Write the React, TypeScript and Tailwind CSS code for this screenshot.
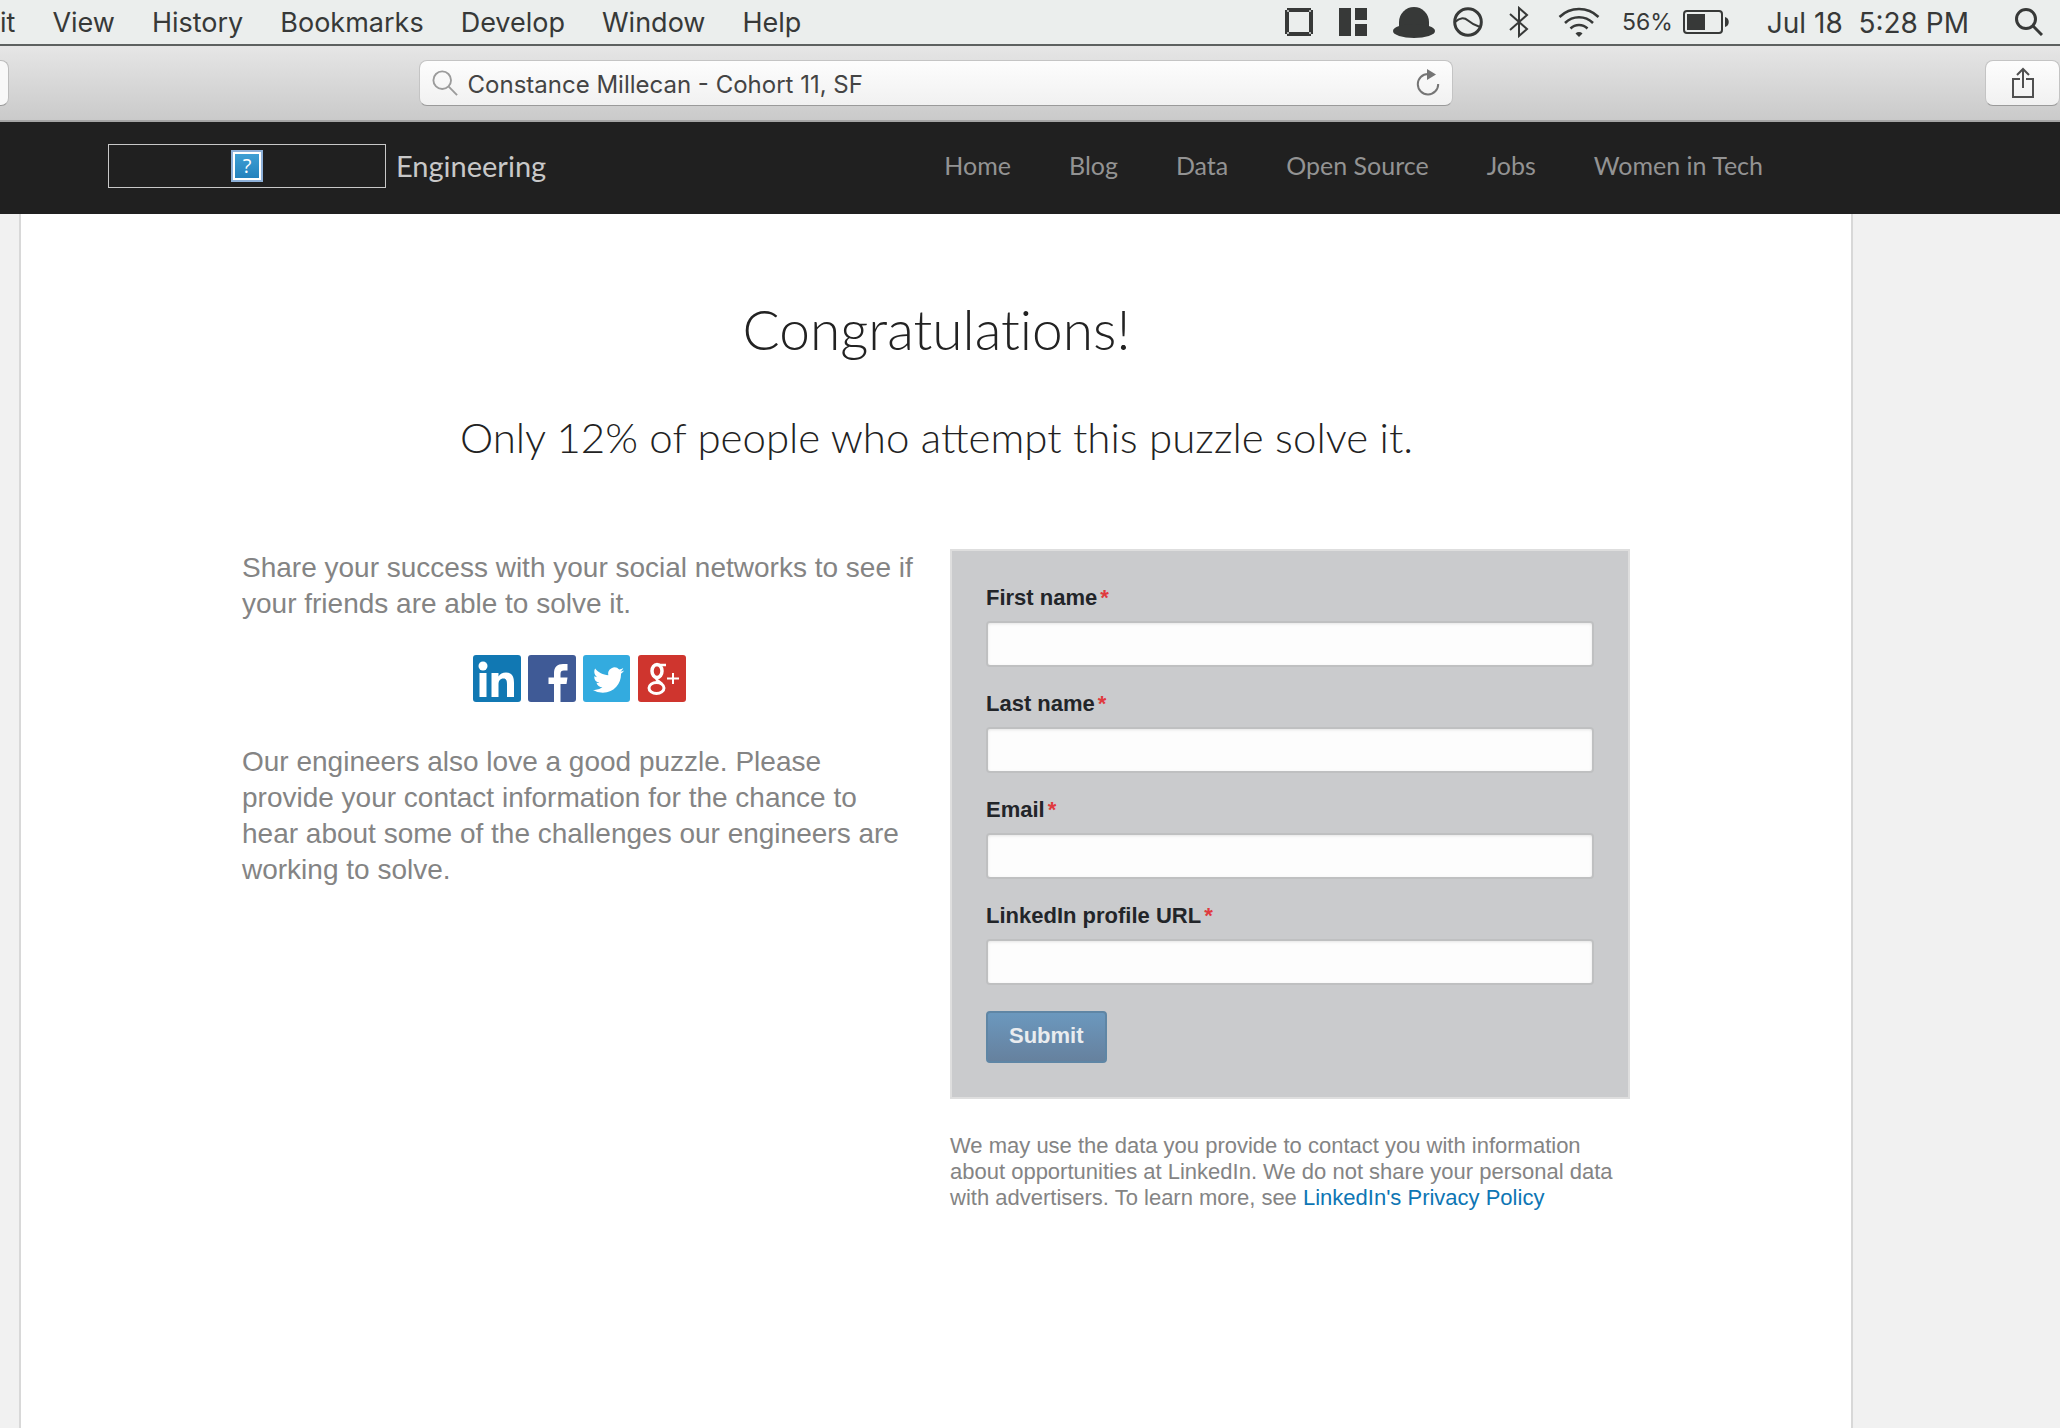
import React from "react";

const menus = ["View", "History", "Bookmarks", "Develop", "Window", "Help"];
const nav = ["Home", "Blog", "Data", "Open Source", "Jobs", "Women in Tech"];
const fields = [
  { id: "first", label: "First name" },
  { id: "last", label: "Last name" },
  { id: "email", label: "Email" },
  { id: "profile", label: "LinkedIn profile URL" },
];

function Magnifier({ className }: { className: string }) {
  return (
    <svg viewBox="0 0 28 28" className={className} fill="none" stroke="currentColor">
      <circle cx="11" cy="11" r="9.500" />
      <path d="M18 18 27 27" />
    </svg>
  );
}

function StatusIcons() {
  return (
    <div className="flex items-center text-[#373938]">
      <svg viewBox="0 0 28 28" className="size-7" fill="currentColor">
        <path d="M2 0H26V4H2ZM2 24H26V28H2ZM0 2H4V26H0ZM24 2H28V26H24Z" />
        <path d="M2 2H4V4H2ZM24 2H26V4H24ZM2 24H4V26H2ZM24 24H26V26H24Z" fill="#b4b7b6" />
      </svg>
      <svg viewBox="0 0 28 28" className="ml-[26px] size-7" fill="currentColor">
        <path d="M0 0H12V28H0ZM16 0H28V12H16ZM16 16H28V28H16Z" />
      </svg>
      <svg viewBox="0 0 42 31" className="ml-[26px] h-[31px] w-[42px]" fill="currentColor">
        <path d="M6 20V15A15 15 0 0 1 36 15V20Z" />
        <ellipse cx="21" cy="24" rx="21" ry="7" />
      </svg>
      <svg viewBox="0 0 30 30" className="ml-[18px] size-[30px]" fill="none" stroke="currentColor" strokeWidth="3">
        <circle cx="15" cy="15" r="13.3" />
        <path d="M2 15C6 11 11 10 15 13.500S21 18 27 20" strokeWidth="2" />
      </svg>
      <svg viewBox="0 0 20 32" className="ml-[26px] h-8 w-5" fill="none" stroke="currentColor" strokeWidth="2">
        <path d="M1 8 18 23 10 30V2L18 9 1 24" />
      </svg>
      <svg viewBox="0 0 42 30" className="ml-[29px] h-[30px] w-[42px]" fill="none" stroke="currentColor" strokeWidth="2.500">
        <path d="M1.500 10A28 28 0 0 1 40.500 10M7 16A20 20 0 0 1 35 16M12.500 21.500A12 12 0 0 1 29.500 21.500" />
        <path d="M21 30 17.500 26.500A5 5 0 0 1 24.500 26.500Z" fill="currentColor" stroke="none" />
      </svg>
      <span className="ml-[22px] text-[23px]">56%</span>
      <svg viewBox="0 0 46 24" className="ml-2.5 h-6 w-[46px]" fill="none" stroke="currentColor" strokeWidth="2">
        <rect x="1" y="1" width="38" height="22" rx="3" />
        <path d="M4 4H22V20H4Z" fill="currentColor" stroke="none" />
        <path d="M42 7C47 8 47 16 42 17Z" fill="currentColor" stroke="none" />
      </svg>
    </div>
  );
}

function BrowserChrome() {
  return (
    <>
      <div className="flex h-[46px] items-center justify-between border-b-2 border-[#5d6160] bg-[#ebeeed] pr-[17px] font-['Inter'] text-[27px] text-[#373938]">
        <nav className="flex items-center gap-[37px] pt-0.5 whitespace-nowrap">
          <span>it</span>
          {menus.map((m) => (
            <button key={m} type="button">{m}</button>
          ))}
        </nav>
        <div className="flex items-center whitespace-nowrap">
          <StatusIcons />
          <span className="ml-[38px] pt-0.5 text-[28px]">Jul 18&nbsp; 5:28 PM</span>
          <button type="button" aria-label="Search" className="ml-[46px]">
            <Magnifier className="size-7 stroke-[3]" />
          </button>
        </div>
      </div>
      <div className="flex h-[76px] items-center border-b-2 border-[#a5a5a5] bg-linear-to-b from-[#e6e6e6] to-[#cacaca]">
        <button type="button" aria-label="Tabs" className="h-[46px] w-[9px] rounded-r-lg border border-l-0 border-[#bcbcbc] border-b-[#9a9a9a] bg-[#f8f8f8]" />
        <div className="flex-[10]" />
        <div className="flex h-[46px] w-[1034px] items-center rounded-lg border border-[#c4c4c4] border-b-[#9a9a9a] bg-linear-to-b from-[#fdfdfd] to-[#f1f1f1] px-3">
          <Magnifier className="size-[26px] text-[#9b9b9b] stroke-2" />
          <input
            aria-label="Address"
            defaultValue="Constance Millecan - Cohort 11, SF"
            className="ml-2.5 min-w-0 flex-1 bg-transparent pt-1 font-['Inter'] text-2xl text-[#444444] outline-none"
          />
          <button type="button" aria-label="Reload">
            <svg viewBox="0 0 24 28" className="h-7 w-6 text-[#757575]" fill="none" stroke="currentColor" strokeWidth="2">
              <path d="M12 5A10.200 10.200 0 1 0 22.200 15" />
              <path d="M11 0 20 5.500 11 11Z" fill="currentColor" stroke="none" />
            </svg>
          </button>
        </div>
        <div className="flex-[13]" />
        <button type="button" aria-label="Share" className="flex h-[46px] w-[75px] items-center justify-center rounded-lg border border-[#c4c4c4] border-b-[#9a9a9a] bg-linear-to-b from-[#fdfdfd] to-[#f1f1f1] text-[#505050]">
          <svg viewBox="0 0 24 32" className="h-8 w-6" fill="none" stroke="currentColor" strokeWidth="2">
            <path d="M9 12H2V30H22V12H15M12 21V2M6 8 12 2 18 8" />
          </svg>
        </button>
      </div>
    </>
  );
}

function SiteHeader() {
  return (
    <header className="flex h-[92px] items-center justify-between bg-[#202020] pr-[297px] pb-1 pl-[108px] font-['Lato'] whitespace-nowrap">
      <a href="#home" className="flex items-center gap-2.5 text-[29px] text-[#c8c8c8]">
        <span className="flex h-11 w-[278px] items-center justify-center border border-[#c8c8c8]">
          <span className="flex size-8 items-center justify-center border-2 border-[#8db0d8] bg-white p-0.5">
            <span className="flex size-full items-center justify-center bg-linear-to-b from-[#3d9fd4] to-[#2482bd] font-['Open_Sans'] text-xl text-white">?</span>
          </span>
        </span>
        Engineering
      </a>
      <nav className="flex gap-[58px] text-[25px] text-[#939393]">
        {nav.map((n) => (
          <a key={n} href="#nav">{n}</a>
        ))}
      </nav>
    </header>
  );
}

function SocialLinks() {
  return (
    <div className="mt-[33px] flex justify-center gap-[7px]">
      <a href="#linkedin" aria-label="LinkedIn">
        <svg viewBox="0 0 48 48" className="size-12" fill="#fff">
          <rect width="48" height="47" rx="3" fill="#1178b3" />
          <circle cx="10" cy="11" r="4.500" />
          <path d="M6.500 18H13.500V42H6.500ZM18.500 18H25.500V21.500C27 19 29.500 17.500 33 17.500C39.500 17.500 41 22 41 28V42H34V29.500C34 26 33.500 23.500 30.500 23.500C27 23.500 25.500 26 25.500 29.500V42H18.500Z" />
        </svg>
      </a>
      <a href="#facebook" aria-label="Facebook">
        <svg viewBox="0 0 48 48" className="size-12" fill="#fff">
          <rect width="48" height="47" rx="3" fill="#3f5a96" />
          <path d="M26 47V29H20.500V22.500H26V18C26 12 29.500 9 35 9H39.500V15.500H36C33.500 15.500 32.500 16.500 32.500 19V22.500H39.500L38.500 29H32.500V47Z" />
        </svg>
      </a>
      <a href="#twitter" aria-label="Twitter">
        <svg viewBox="0 0 48 48" className="size-12" fill="#fff">
          <rect width="47" height="47" rx="3" fill="#33abdf" />
          <g transform="translate(10 9.500) scale(1.300)">
            <path d="M23.950 4.570a10 10 0 0 1-2.820.77 4.960 4.960 0 0 0 2.160-2.720c-.95.560-2 .96-3.130 1.180a4.920 4.920 0 0 0-8.380 4.480C7.690 8.090 4.070 6.130 1.640 3.160a4.820 4.820 0 0 0-.67 2.480c0 1.710.87 3.210 2.190 4.100a4.900 4.900 0 0 1-2.230-.62v.06a4.920 4.920 0 0 0 3.950 4.830 5 5 0 0 1-2.210.08 4.940 4.940 0 0 0 4.600 3.420A9.870 9.870 0 0 1 0 19.540a14 14 0 0 0 7.550 2.210c9.050 0 14-7.500 14-13.980 0-.21 0-.42-.02-.63a9.940 9.940 0 0 0 2.460-2.550z" />
          </g>
        </svg>
      </a>
      <a href="#google" aria-label="Google Plus">
        <svg viewBox="0 0 48 48" className="size-12" fill="none" stroke="#fff">
          <rect width="48" height="47" rx="3" fill="#cf352e" stroke="none" />
          <ellipse cx="19" cy="16" rx="5" ry="6.500" strokeWidth="3.500" />
          <path d="M18 10H28M19 22C16 25 22 26 24 29" strokeWidth="2.500" />
          <ellipse cx="18.500" cy="33" rx="7.500" ry="5.500" strokeWidth="3" />
          <path d="M35 18V29M29 23.500H41" strokeWidth="2" />
        </svg>
      </a>
    </div>
  );
}

function ContactForm() {
  return (
    <form onSubmit={(e) => e.preventDefault()} className="border-2 border-[#dedede] bg-[#cacbcd] px-[34px] pt-8 pb-[34px]">
      {fields.map((f) => (
        <div key={f.id} className="mb-[22px]">
          <label htmlFor={f.id} className="block text-[22px] leading-[30px] font-bold text-[#222529]">
            {f.label}
            <span className="ml-[3px] text-[#e03a3e]">*</span>
          </label>
          <input id={f.id} type="text" className="mt-2 block h-[46px] w-full rounded border-2 border-[#bfc0c1] bg-[#fdfdfd] px-2 shadow-[inset_0_1px_3px_rgba(0,0,0,0.1)]" />
        </div>
      ))}
      <button type="submit" className="mt-[26px] block h-[52px] rounded border-2 border-[#5f86a5] bg-linear-to-b from-[#6b98be] to-[#66819e] px-[21px] pb-1 text-[22px] font-bold text-[#e9ecef]">
        Submit
      </button>
    </form>
  );
}

export default function App() {
  return (
    <div className="flex min-h-screen flex-col bg-[#f1f1f1] font-['Liberation_Sans',sans-serif]">
      <BrowserChrome />
      <SiteHeader />
      <main className="mr-[207px] ml-[19px] flex-1 border-x-2 border-[#d8d8d8] bg-white pr-[220px] pl-[221px] pt-[82px] pb-16">
        <div className="text-center font-['Lato'] font-light text-[#222222]">
          <h1 className="text-[55px] leading-[66px] [font-variant-ligatures:none]">Congratulations!</h1>
          <h2 className="mt-[50px] text-[42px] leading-[50px]">Only 12% of people who attempt this puzzle solve it.</h2>
        </div>
        <div className="mt-[87px] grid grid-cols-[674px_680px] gap-[34px] text-[#848484]">
          <section className="pt-px text-[28px] leading-9">
            <p>
              Share your success with your social networks to see if<br />
              your friends are able to solve it.
            </p>
            <SocialLinks />
            <p className="mt-[41px]">
              Our engineers also love a good puzzle. Please<br />
              provide your contact information for the chance to<br />
              hear about some of the challenges our engineers are<br />
              working to solve.
            </p>
          </section>
          <section>
            <ContactForm />
            <p className="mt-[34px] text-[22px] leading-[26px]">
              We may use the data you provide to contact you with information<br />
              about opportunities at LinkedIn. We do not share your personal data<br />
              with advertisers. To learn more, see <a href="#privacy" className="text-[#0e76b4]">LinkedIn's Privacy Policy</a>
            </p>
          </section>
        </div>
      </main>
    </div>
  );
}
